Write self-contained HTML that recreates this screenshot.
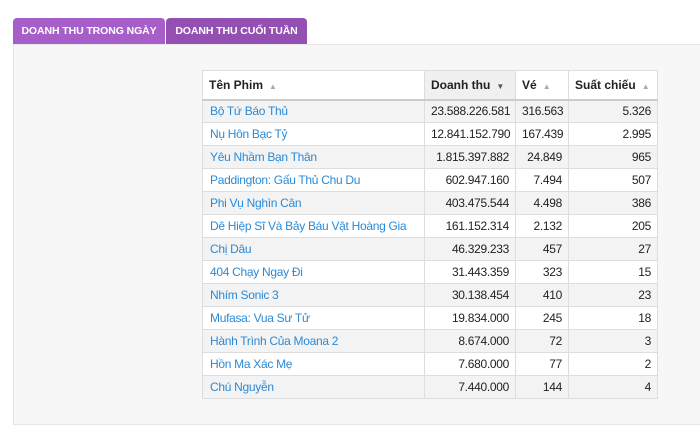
<!DOCTYPE html><html><head><style>
body{margin:0;width:700px;height:438px;background:#fff;font-family:"Liberation Sans",sans-serif;position:relative;overflow:hidden}
.tab{position:absolute;top:18px;height:26px;line-height:26px;color:#fff;font-size:10.5px;font-weight:bold;text-align:center;border-radius:4px 4px 0 0;letter-spacing:-0.1px}
.panel{position:absolute;left:13px;top:44px;width:700px;height:381px;background:#f7f7f7;border:1px solid #e6e6e6;box-sizing:border-box}
table{position:absolute;left:202px;top:70px;border-collapse:collapse;font-size:12px;background:#fff;table-layout:fixed;width:455px}
td,th{border:1px solid #ddd;height:23px;padding:0 6px 0 6px;white-space:nowrap;overflow:hidden;box-sizing:border-box;letter-spacing:-0.3px}
th{height:29px;text-align:left;font-weight:bold;color:#222;border-bottom:2px solid #ccc;letter-spacing:0}
td{text-align:right;color:#222}
td:first-child{text-align:left;color:#2a8ad6;padding-left:7px}
tr:nth-child(odd) td{background:#f3f3f3}
.a{color:#aaa;font-size:8px;margin-left:6px}
</style></head><body>
<div class="tab" style="left:13px;width:152px;background:#a85ec9">DOANH THU TRONG NGÀY</div>
<div class="tab" style="left:166px;width:141px;background:#944fb2">DOANH THU CUỐI TUẦN</div>
<div class="panel"></div>
<table>
<colgroup><col style="width:222px"><col style="width:91px"><col style="width:53px"><col style="width:89px"></colgroup>
<thead><tr><th>Tên Phim<span class="a">▲</span></th><th style="background:#f0f0f0">Doanh thu<span class="a" style="color:#555">▼</span></th><th>Vé<span class="a">▲</span></th><th>Suất chiếu<span class="a">▲</span></th></tr></thead>
<tbody>
<tr><td>Bộ Tứ Báo Thủ</td><td>23.588.226.581</td><td>316.563</td><td>5.326</td></tr>
<tr><td>Nụ Hôn Bạc Tỷ</td><td>12.841.152.790</td><td>167.439</td><td>2.995</td></tr>
<tr><td>Yêu Nhầm Bạn Thân</td><td>1.815.397.882</td><td>24.849</td><td>965</td></tr>
<tr><td>Paddington: Gấu Thủ Chu Du</td><td>602.947.160</td><td>7.494</td><td>507</td></tr>
<tr><td>Phi Vụ Nghìn Cân</td><td>403.475.544</td><td>4.498</td><td>386</td></tr>
<tr><td>Dê Hiệp Sĩ Và Bảy Báu Vật Hoàng Gia</td><td>161.152.314</td><td>2.132</td><td>205</td></tr>
<tr><td>Chị Dâu</td><td>46.329.233</td><td>457</td><td>27</td></tr>
<tr><td>404 Chạy Ngay Đi</td><td>31.443.359</td><td>323</td><td>15</td></tr>
<tr><td>Nhím Sonic 3</td><td>30.138.454</td><td>410</td><td>23</td></tr>
<tr><td>Mufasa: Vua Sư Tử</td><td>19.834.000</td><td>245</td><td>18</td></tr>
<tr><td>Hành Trình Của Moana 2</td><td>8.674.000</td><td>72</td><td>3</td></tr>
<tr><td>Hồn Ma Xác Mẹ</td><td>7.680.000</td><td>77</td><td>2</td></tr>
<tr><td>Chú Nguyễn</td><td>7.440.000</td><td>144</td><td>4</td></tr>
</tbody></table>
</body></html>
